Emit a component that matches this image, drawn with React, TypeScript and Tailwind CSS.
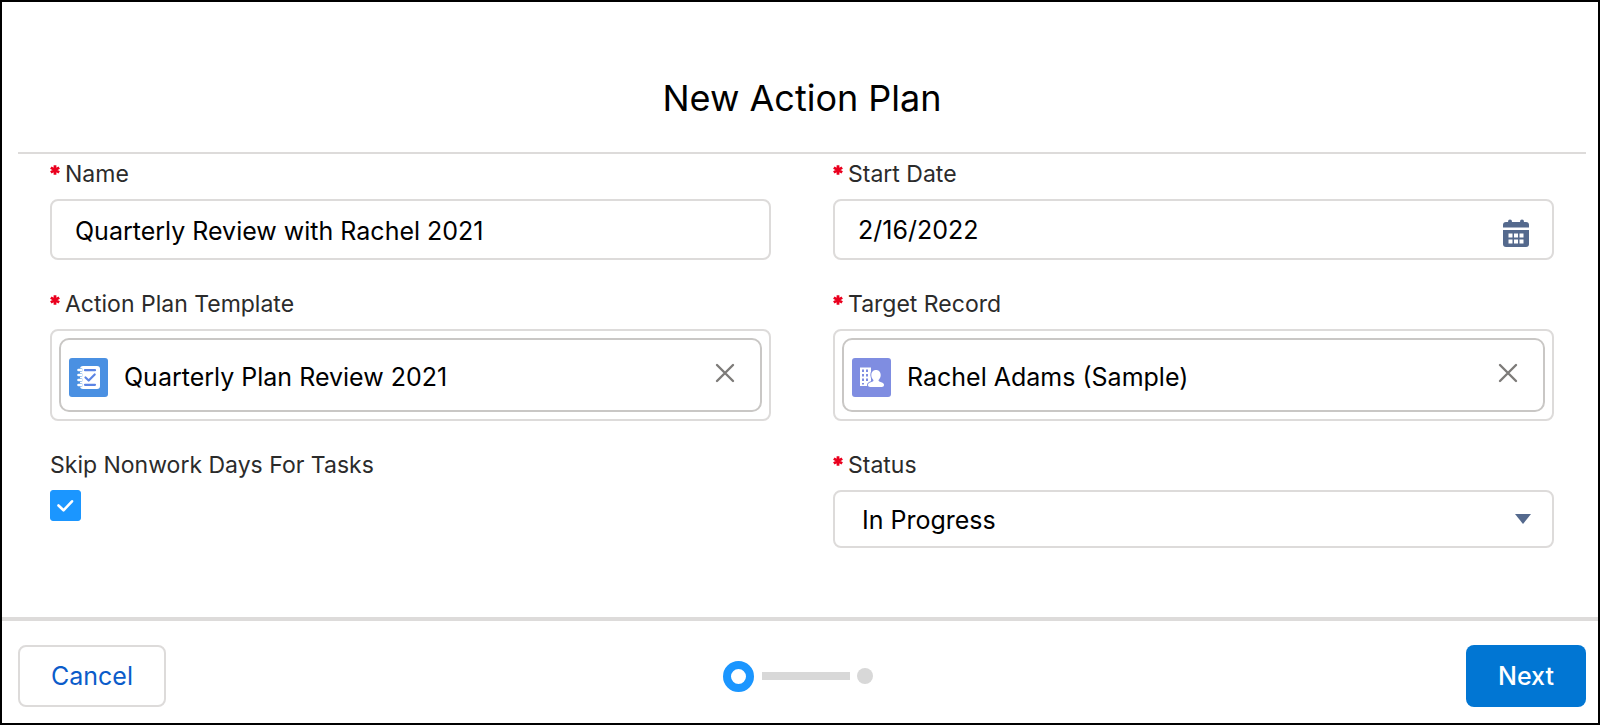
import React, { useState } from "react";

interface FieldProps {
  label: string;
  htmlFor: string;
  required?: boolean;
  children: React.ReactNode;
}

const AsteriskIcon = () => (
  <svg
    viewBox="0 0 10 10"
    className="mb-2 h-[10px] w-[10px]"
    stroke="#ea001e"
    strokeWidth="2.8"
  >
    <path d="M5 0.2v9.6M0.8 2.6l8.4 4.8M9.2 2.6L0.8 7.4" />
  </svg>
);

const Field: React.FC<FieldProps> = ({
  label,
  htmlFor,
  required = true,
  children,
}) => (
  <div className="min-w-0">
    <label
      htmlFor={htmlFor}
      className="mb-[5px] flex h-10 items-center text-[23px] leading-8 text-[#2b2b2b]"
    >
      {required && (
        <span aria-hidden="true" className="w-[15px]">
          <AsteriskIcon />
        </span>
      )}
      {label}
    </label>
    {children}
  </div>
);

const PlanIcon = () => (
  <svg viewBox="0 0 39 39" className="h-[39px] w-[39px] shrink-0">
    <rect width="39" height="39" rx="3" fill="#4a90e2" />
    <rect x="11" y="8" width="20" height="23" rx="3" fill="#fff" />
    <g stroke="#4a90e2" strokeLinecap="round" strokeWidth="3.6">
      <path d="M9.5 12h2.500M9.5 17h2.500M9.5 22h2.500M9.5 27h2.500" />
    </g>
    <g stroke="#fff" strokeLinecap="round" strokeWidth="2.6">
      <path d="M9.5 12h3M9.5 17h3M9.5 22h3M9.5 27h3" />
    </g>
    <g
      fill="none"
      stroke="#5c84e4"
      strokeLinecap="round"
      strokeLinejoin="round"
      strokeWidth="2.2"
    >
      <path d="M16 12.2h10M16 26.8h10M16.5 19.5l3.2 3 6-6" />
    </g>
  </svg>
);

const AccountIcon = () => (
  <svg viewBox="0 0 39 39" className="h-[39px] w-[39px] shrink-0">
    <rect width="39" height="39" rx="3" fill="#7f8de1" />
    <path d="M8 9.5h11v18.500H8z" fill="#fff" />
    <g fill="#7f8de1">
      <path d="M10 11.500h2v2.500h-2zM14 11.500h2v2.500h-2zM10 16h2v2.500h-2zM14 16h2v2.500h-2zM10 20.500h2v2.500h-2zM14 20.500h2v2.500h-2zM10 25h2v1.500h-2z" />
    </g>
    <path
      d="M24 12c3 0 4.700 2.200 4.700 5 0 2-.8 3.500-1.900 4.700-.5.700-.3 1.300.5 1.700l3.200 1.400c1 .5 1.500 1.300 1.500 2.300 0 1.200-.9 2-2.200 2H18.200c-1.300 0-2.200-.8-2.200-2 0-1 .5-1.800 1.500-2.300l3.200-1.400c.8-.4 1-.9.5-1.700-1.100-1.200-1.900-2.700-1.900-4.700 0-2.800 1.700-5 4.700-5z"
      fill="#fff"
      stroke="#7f8de1"
      strokeWidth="2"
      paintOrder="stroke"
    />
  </svg>
);

const CalendarIcon = () => (
  <svg viewBox="0 0 26 28" className="h-7 w-[26px]" fill="#54698d">
    <rect x="5" y="0.500" width="4" height="6" rx="2" />
    <rect x="17" y="0.500" width="4" height="6" rx="2" />
    <path d="M0 8.500V6a3 3 0 0 1 3-3h20a3 3 0 0 1 3 3v2.500z" />
    <path d="M0 11h26v14a3 3 0 0 1-3 3H3a3 3 0 0 1-3-3z" />
    <path
      d="M5.500 14.500h4v4h-4zM11 14.500h4v4h-4zM16.500 14.500h4v4h-4zM5.500 20.500h4v4h-4zM11 20.500h4v4h-4zM16.500 20.500h4v4h-4z"
      fill="#fff"
    />
  </svg>
);

interface LookupProps {
  id: string;
  value: string;
  icon: React.ReactNode;
  onClear: () => void;
}

const Lookup: React.FC<LookupProps> = ({ id, value, icon, onClear }) => (
  <div className="rounded-lg border-2 border-[#dddbda] p-[7px]">
    <div className="flex h-[74px] items-center rounded-[10px] border-2 border-[#c9c7c5] pl-2 pr-[25px]">
      <div className="flex min-w-0 flex-1 items-center gap-4 pt-1">
        {icon}
        <input
          id={id}
          type="text"
          value={value}
          readOnly
          className="w-full min-w-0 text-[25px] leading-8 outline-none"
        />
      </div>
      <button
        type="button"
        aria-label={`Clear ${value}`}
        onClick={onClear}
        className="pb-1"
      >
        <svg
          viewBox="0 0 20 20"
          className="h-5 w-5"
          fill="none"
          stroke="#7d7b79"
          strokeWidth="2.4"
          strokeLinecap="round"
        >
          <path d="M2 2l16 16M18 2L2 18" />
        </svg>
      </button>
    </div>
  </div>
);

export default function App() {
  const [name, setName] = useState("Quarterly Review with Rachel 2021");
  const [startDate, setStartDate] = useState("2/16/2022");
  const [template, setTemplate] = useState("Quarterly Plan Review 2021");
  const [target, setTarget] = useState("Rachel Adams (Sample)");
  const [skipDays, setSkipDays] = useState(true);
  const [status, setStatus] = useState("In Progress");

  return (
    <form
      onSubmit={(e) => e.preventDefault()}
      className="flex min-h-screen flex-col border-2 border-black bg-white font-['Inter',sans-serif] text-black"
    >
      {/* Header */}
      <header className="ml-4 mr-3 border-b-2 border-[#dddbda] pb-[30px] pt-[72px] text-center">
        <h1 className="text-[36px] leading-[48px]">New Action Plan</h1>
      </header>

      {/* Fields */}
      <main className="ml-12 mr-11 grid flex-1 grid-cols-2 content-start gap-x-[62px] gap-y-6 pb-8">
        <Field label="Name" htmlFor="name">
          <input
            id="name"
            type="text"
            value={name}
            onChange={(e) => setName(e.target.value)}
            className="h-[61px] w-full rounded-lg border-2 border-[#dddbda] px-[23px] pt-[2px] text-[25px]"
          />
        </Field>

        <Field label="Start Date" htmlFor="start-date">
          <div className="flex h-[61px] items-center rounded-lg border-2 border-[#dddbda] px-[23px] pt-[2px]">
            <input
              id="start-date"
              type="text"
              value={startDate}
              onChange={(e) => setStartDate(e.target.value)}
              className="min-w-0 flex-1 text-[25px] outline-none"
            />
            <button type="button" aria-label="Select a date" className="pt-1">
              <CalendarIcon />
            </button>
          </div>
        </Field>

        <Field label="Action Plan Template" htmlFor="template">
          <Lookup
            id="template"
            value={template}
            icon={<PlanIcon />}
            onClear={() => setTemplate("")}
          />
        </Field>

        <Field label="Target Record" htmlFor="target">
          <Lookup
            id="target"
            value={target}
            icon={<AccountIcon />}
            onClear={() => setTarget("")}
          />
        </Field>

        <Field
          label="Skip Nonwork Days For Tasks"
          htmlFor="skip-days"
          required={false}
        >
          <div className="grid h-[31px] w-[31px]">
            <input
              id="skip-days"
              type="checkbox"
              checked={skipDays}
              onChange={(e) => setSkipDays(e.target.checked)}
              className="col-start-1 row-start-1 h-full w-full appearance-none rounded-[3px] border border-[#dddbda] checked:border-[#1b96ff] checked:bg-[#1b96ff]"
            />
            {skipDays && (
              <svg
                viewBox="0 0 31 31"
                className="pointer-events-none col-start-1 row-start-1 h-full w-full"
                fill="none"
                stroke="#fff"
                strokeWidth="2.6"
                strokeLinecap="round"
                strokeLinejoin="round"
              >
                <path d="M8.500 15.500l5 4.800L22 11.300" />
              </svg>
            )}
          </div>
        </Field>

        <Field label="Status" htmlFor="status">
          <div className="grid">
            <select
              id="status"
              value={status}
              onChange={(e) => setStatus(e.target.value)}
              className="col-start-1 row-start-1 h-[58px] w-full appearance-none rounded-lg border-2 border-[#dddbda] px-[27px] pt-1 text-[25px]"
            >
              <option>In Progress</option>
              <option>Not Started</option>
              <option>Completed</option>
            </select>
            <svg
              viewBox="0 0 16 10"
              className="pointer-events-none col-start-1 row-start-1 mr-[23px] h-[10px] w-4 self-center justify-self-end"
              fill="#54698d"
            >
              <path d="M0 0h16L8 10z" />
            </svg>
          </div>
        </Field>
      </main>

      {/* Footer */}
      <footer className="grid grid-cols-[1fr_auto_1fr] items-center border-t-4 border-[#dddbda] pb-4 pl-4 pr-3 pt-6 text-[25px]">
        <button
          type="button"
          className="h-[62px] justify-self-start rounded-lg border-2 border-[#dddbda] px-[31px] pt-[2px] text-[#0b5cca]"
        >
          Cancel
        </button>

        <div className="mr-2 flex items-center">
          <span className="h-[31px] w-[31px] rounded-full border-8 border-[#1b96ff]" />
          <span className="ml-2 mr-[7px] h-2 w-[88px] bg-[#d8d8d8]" />
          <span className="h-4 w-4 rounded-full bg-[#d8d8d8]" />
        </div>

        <button
          type="submit"
          className="h-[62px] justify-self-end rounded-lg bg-[#0176d3] px-8 pt-[2px] font-medium text-white"
        >
          Next
        </button>
      </footer>
    </form>
  );
}
